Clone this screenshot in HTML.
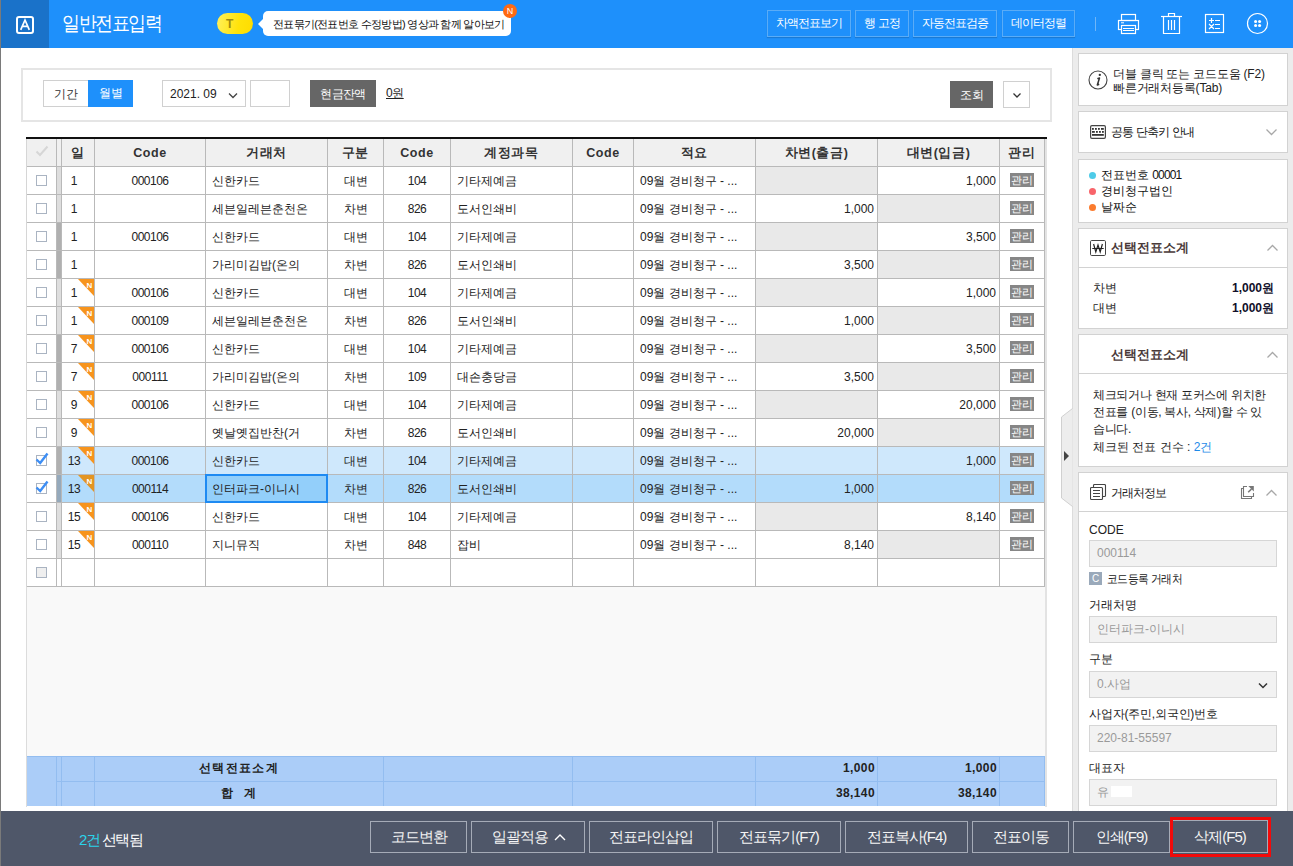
<!DOCTYPE html>
<html><head><meta charset="utf-8">
<style>
*{box-sizing:border-box;margin:0;padding:0}
html,body{width:1293px;height:866px;overflow:hidden;background:#fff;font-family:"Liberation Sans",sans-serif;color:#222;font-size:12px}
.a{position:absolute}
#lb{position:absolute;left:0;top:0;width:1px;height:866px;background:#7a7a7a;z-index:50}
#hdr{position:absolute;left:0;top:0;width:1293px;height:48px;background:#1e90fb}
#logo{position:absolute;left:1px;top:0;width:48px;height:48px;background:#1a72c9}
#logo .box{position:absolute;left:15px;top:16px;width:18px;height:18px;border:2px solid #fff;border-radius:2px;color:#fff;font-size:13px;line-height:14px;text-align:center;font-weight:normal}
#title{position:absolute;left:62px;top:10px;font-size:19.5px;color:#fff;line-height:26px;letter-spacing:-1.6px;transform:scaleX(0.9);transform-origin:0 0}
#tbadge{position:absolute;left:217px;top:13px;width:36px;height:21px;border-radius:11px;background:linear-gradient(100deg,#fff05c,#ffe30a 60%,#ffdc00);color:#a08a10;font-size:12px;line-height:23px;padding-left:9px;font-weight:bold}
#bubble{position:absolute;left:263px;top:11px;width:248px;height:25px;background:#fff;border-radius:5px;font-size:11px;line-height:27px;color:#111;padding-left:10px;letter-spacing:-0.7px;white-space:nowrap}
#bubble:before{content:"";position:absolute;left:-5px;top:8px;border-right:5px solid #fff;border-top:5px solid transparent;border-bottom:5px solid transparent}
#nbadge{position:absolute;left:503px;top:4px;width:14px;height:14px;border-radius:7px;background:#ff6a13;color:#fff;font-size:9px;line-height:14px;text-align:center}
.hb{position:absolute;top:10px;height:27px;border:1px solid #5aacf7;color:#fff;font-size:12px;line-height:25px;letter-spacing:-1px;text-align:center;box-shadow:0 1px 1px rgba(0,0,0,0.15)}
.ic{position:absolute}
/* filter */
#filter{position:absolute;left:21px;top:68px;width:1031px;height:54px;border:2px solid #e5e5e5}
.fbtn{position:absolute;top:80px;height:27px;font-size:12px;line-height:27px;text-align:center}
/* table */
#tbl{position:absolute;left:26px;top:137px;width:1021px;height:2px;background:#111}
.c{position:absolute;border-right:1px solid #b9b9b9;border-bottom:1px solid #b9b9b9;font-size:12px;line-height:29px;white-space:nowrap;overflow:hidden;color:#222}
.c.h{background:#f0f0f0;font-weight:bold;text-align:center;font-size:12.5px;color:#333;letter-spacing:0.6px}
.c.l{text-align:left;padding-left:6px}
.c.m{text-align:center}
.c.r{text-align:right;padding-right:3px}
.c.ck{text-align:center}
.c.num{letter-spacing:-0.5px}
.c.focus{border:2px solid #1e8af2;background:#93cffa;line-height:27px;padding-left:5px;z-index:5}
.cb{display:inline-block;position:relative;width:11px;height:11px;border:1px solid #aab4c2;vertical-align:middle;margin-top:-2px;background:#fff}
.cb.dis{background:#efefef;border-color:#a9b3c1}
.nb{position:absolute;right:0;top:0}
.day{display:block;text-align:center;padding-right:8px;letter-spacing:-0.4px}
.gl{display:inline-block;background:#868686;color:#fff;width:24px;height:14px;line-height:14px;font-size:11px;vertical-align:middle;margin-top:-3px}
#grayarea{position:absolute;left:26px;top:587px;width:1020px;height:170px;background:#f9f9f9}
.s{position:absolute;background:#abcdf8;border-right:1px solid #93bdf0;border-bottom:1px solid #93bdf0;font-weight:bold;font-size:12px;line-height:24px;color:#222}
.s.sm{text-align:center;letter-spacing:1.3px;line-height:22px}
.s.sr{text-align:right;padding-right:2px;line-height:22px;letter-spacing:0.4px}
/* right panel */
#rp{position:absolute;left:1072px;top:48px;width:221px;height:763px;background:#ececec;border-left:1px solid #dcdcdc}
.card{position:absolute;left:1078px;width:210px;background:#fff;border:1px solid #d2d2d2}
/* footer */
#ftr{position:absolute;left:0;top:811px;width:1293px;height:55px;background:#4f5769}
.fb{position:absolute;top:821px;height:32px;border:1px solid #a5abb7;color:#f4f4f4;font-size:15px;line-height:30px;text-align:center;letter-spacing:-1px}
</style></head><body>
<div id="lb"></div>
<div id="hdr">
  <div id="logo"><svg style="position:absolute;left:15px;top:16px" width="18" height="18" viewBox="0 0 18 18"><rect x="1" y="1" width="16" height="16" rx="2" fill="none" stroke="#fff" stroke-width="2"/><path d="M4.7 13.8 L9 4 L13.3 13.8 M6.3 10.4 H11.7" fill="none" stroke="#fff" stroke-width="1.7"/></svg></div>
  <div id="title">일반전표입력</div>
  <div id="tbadge">T</div>
  <div id="bubble">전표묶기(전표번호 수정방법) 영상과 함께 알아보기</div>
  <div id="nbadge">N</div>
  <div class="hb" style="left:767px;width:84px">차액전표보기</div>
  <div class="hb" style="left:855px;width:54px">행 고정</div>
  <div class="hb" style="left:913px;width:84px">자동전표검증</div>
  <div class="hb" style="left:1002px;width:73px">데이터정렬</div>
  <div class="a" style="left:1095px;top:17px;width:1px;height:14px;background:#6fb6f8"></div>
  <svg class="ic" style="left:1110px;top:0px" width="183" height="48" viewBox="1110 0 183 48" fill="none" stroke="#fff" stroke-width="1.2">
    <!-- printer -->
    <rect x="1121.5" y="14.5" width="14" height="6"/>
    <rect x="1118.5" y="20.5" width="20" height="9"/>
    <rect x="1121.5" y="25.5" width="14" height="8" fill="#1e90fb"/>
    <path d="M1123 28.5 H1134 M1123 30.5 H1134"/>
    <path d="M1121 22.8 H1124" stroke-width="1"/>
    <!-- trash -->
    <path d="M1161 16.5 H1182"/>
    <path d="M1168.5 16.5 V13.5 H1174.5 V16.5"/>
    <path d="M1163.5 16.5 V33.5 H1179.5 V16.5"/>
    <path d="M1168.5 20 V30 M1171.5 20 V30 M1174.5 20 V30"/>
    <!-- calc -->
    <rect x="1205.5" y="14.5" width="18" height="18"/>
    <path d="M1209 20.5 H1214 M1211.5 18 V23 M1215 20.5 H1220 M1209 24 L1214 29 M1214 24 L1209 29 M1215 24.5 H1220 M1215 28.5 H1220"/>
    <!-- dots circle -->
    <circle cx="1257.5" cy="23.5" r="10"/>
    <circle cx="1255.6" cy="21.5" r="1.55" fill="#fff" stroke="none"/><circle cx="1259.6" cy="21.5" r="1.55" fill="#fff" stroke="none"/>
    <circle cx="1255.6" cy="25.5" r="1.55" fill="#fff" stroke="none"/><circle cx="1259.6" cy="25.5" r="1.55" fill="#fff" stroke="none"/>
  </svg>
</div>

<div id="filter"></div>
<div class="fbtn" style="left:43px;width:46px;border:1px solid #d0d0d0;color:#333">기간</div>
<div class="fbtn" style="left:88px;width:45px;background:#1e90fb;color:#fff">월별</div>
<div class="fbtn" style="left:162px;width:84px;border:1px solid #d0d0d0;color:#222;text-align:left;padding-left:7px">2021. 09
  <svg style="position:absolute;left:65px;top:11px" width="10" height="7" viewBox="0 0 10 7"><path d="M1 1.5 L5 5.5 L9 1.5" fill="none" stroke="#444" stroke-width="1.3"/></svg></div>
<div class="fbtn" style="left:250px;width:40px;border:1px solid #d0d0d0"></div>
<div class="fbtn" style="left:310px;width:66px;background:#666;color:#fff;font-size:12px;line-height:29px;letter-spacing:-0.6px">현금잔액</div>
<div class="a" style="left:386px;top:81px;height:27px;line-height:25px;font-size:12px;color:#222;text-decoration:underline;letter-spacing:-0.5px">0원</div>
<div class="fbtn" style="left:950px;width:43px;top:81px;background:#666;color:#fff;line-height:29px">조회</div>
<div class="fbtn" style="left:1003px;width:27px;top:81px;border:1px solid #d0d0d0">
  <svg style="position:absolute;left:8px;top:10px" width="10" height="7" viewBox="0 0 10 7"><path d="M1.5 1.5 L5 5 L8.5 1.5" fill="none" stroke="#333" stroke-width="1.3"/></svg></div>

<div id="tbl"></div>
<div class="c h" style="left:27px;top:139px;width:30px;height:28px;"><svg width="14" height="12" viewBox="0 0 14 12" style="margin-top:2px"><path d="M1.5 6.5 L5 10 L12.5 1.5" fill="none" stroke="#d6d6d6" stroke-width="2"/></svg></div>
<div class="c h" style="left:57px;top:139px;width:5px;height:28px;"></div>
<div class="c h" style="left:62px;top:139px;width:33px;height:28px;">일</div>
<div class="c h" style="left:95px;top:139px;width:111px;height:28px;">Code</div>
<div class="c h" style="left:206px;top:139px;width:122px;height:28px;">거래처</div>
<div class="c h" style="left:328px;top:139px;width:56px;height:28px;">구분</div>
<div class="c h" style="left:384px;top:139px;width:67px;height:28px;">Code</div>
<div class="c h" style="left:451px;top:139px;width:122px;height:28px;">계정과목</div>
<div class="c h" style="left:573px;top:139px;width:61px;height:28px;">Code</div>
<div class="c h" style="left:634px;top:139px;width:122px;height:28px;">적요</div>
<div class="c h" style="left:756px;top:139px;width:122px;height:28px;">차변(출금)</div>
<div class="c h" style="left:878px;top:139px;width:122px;height:28px;">대변(입금)</div>
<div class="c h" style="left:1000px;top:139px;width:45px;height:28px;">관리</div>
<div class="c ck" style="left:27px;top:167px;width:30px;height:28px;"><span class="cb"></span></div>
<div class="c bar" style="left:57px;top:167px;width:5px;height:28px;background:#dedede;"></div>
<div class="c " style="left:62px;top:167px;width:33px;height:28px;"><span class="day">1</span></div>
<div class="c m num" style="left:95px;top:167px;width:111px;height:28px;">000106</div>
<div class="c l" style="left:206px;top:167px;width:122px;height:28px;">신한카드</div>
<div class="c m" style="left:328px;top:167px;width:56px;height:28px;">대변</div>
<div class="c m num" style="left:384px;top:167px;width:67px;height:28px;">104</div>
<div class="c l" style="left:451px;top:167px;width:122px;height:28px;">기타제예금</div>
<div class="c m" style="left:573px;top:167px;width:61px;height:28px;"></div>
<div class="c l" style="left:634px;top:167px;width:122px;height:28px;">09월 경비청구 - ...</div>
<div class="c r" style="left:756px;top:167px;width:122px;height:28px;background:#e9e9e9;"></div>
<div class="c r" style="left:878px;top:167px;width:122px;height:28px;">1,000</div>
<div class="c m" style="left:1000px;top:167px;width:45px;height:28px;"><span class="gl">관리</span></div>
<div class="c ck" style="left:27px;top:195px;width:30px;height:28px;"><span class="cb"></span></div>
<div class="c bar" style="left:57px;top:195px;width:5px;height:28px;background:#dedede;"></div>
<div class="c " style="left:62px;top:195px;width:33px;height:28px;"><span class="day">1</span></div>
<div class="c m num" style="left:95px;top:195px;width:111px;height:28px;"></div>
<div class="c l" style="left:206px;top:195px;width:122px;height:28px;">세븐일레븐춘천온</div>
<div class="c m" style="left:328px;top:195px;width:56px;height:28px;">차변</div>
<div class="c m num" style="left:384px;top:195px;width:67px;height:28px;">826</div>
<div class="c l" style="left:451px;top:195px;width:122px;height:28px;">도서인쇄비</div>
<div class="c m" style="left:573px;top:195px;width:61px;height:28px;"></div>
<div class="c l" style="left:634px;top:195px;width:122px;height:28px;">09월 경비청구 - ...</div>
<div class="c r" style="left:756px;top:195px;width:122px;height:28px;">1,000</div>
<div class="c r" style="left:878px;top:195px;width:122px;height:28px;background:#e9e9e9;"></div>
<div class="c m" style="left:1000px;top:195px;width:45px;height:28px;"><span class="gl">관리</span></div>
<div class="c ck" style="left:27px;top:223px;width:30px;height:28px;"><span class="cb"></span></div>
<div class="c bar" style="left:57px;top:223px;width:5px;height:28px;background:#b0b0b0;"></div>
<div class="c " style="left:62px;top:223px;width:33px;height:28px;"><span class="day">1</span></div>
<div class="c m num" style="left:95px;top:223px;width:111px;height:28px;">000106</div>
<div class="c l" style="left:206px;top:223px;width:122px;height:28px;">신한카드</div>
<div class="c m" style="left:328px;top:223px;width:56px;height:28px;">대변</div>
<div class="c m num" style="left:384px;top:223px;width:67px;height:28px;">104</div>
<div class="c l" style="left:451px;top:223px;width:122px;height:28px;">기타제예금</div>
<div class="c m" style="left:573px;top:223px;width:61px;height:28px;"></div>
<div class="c l" style="left:634px;top:223px;width:122px;height:28px;">09월 경비청구 - ...</div>
<div class="c r" style="left:756px;top:223px;width:122px;height:28px;background:#e9e9e9;"></div>
<div class="c r" style="left:878px;top:223px;width:122px;height:28px;">3,500</div>
<div class="c m" style="left:1000px;top:223px;width:45px;height:28px;"><span class="gl">관리</span></div>
<div class="c ck" style="left:27px;top:251px;width:30px;height:28px;"><span class="cb"></span></div>
<div class="c bar" style="left:57px;top:251px;width:5px;height:28px;background:#b0b0b0;"></div>
<div class="c " style="left:62px;top:251px;width:33px;height:28px;"><span class="day">1</span></div>
<div class="c m num" style="left:95px;top:251px;width:111px;height:28px;"></div>
<div class="c l" style="left:206px;top:251px;width:122px;height:28px;">가리미김밥(온의</div>
<div class="c m" style="left:328px;top:251px;width:56px;height:28px;">차변</div>
<div class="c m num" style="left:384px;top:251px;width:67px;height:28px;">826</div>
<div class="c l" style="left:451px;top:251px;width:122px;height:28px;">도서인쇄비</div>
<div class="c m" style="left:573px;top:251px;width:61px;height:28px;"></div>
<div class="c l" style="left:634px;top:251px;width:122px;height:28px;">09월 경비청구 - ...</div>
<div class="c r" style="left:756px;top:251px;width:122px;height:28px;">3,500</div>
<div class="c r" style="left:878px;top:251px;width:122px;height:28px;background:#e9e9e9;"></div>
<div class="c m" style="left:1000px;top:251px;width:45px;height:28px;"><span class="gl">관리</span></div>
<div class="c ck" style="left:27px;top:279px;width:30px;height:28px;"><span class="cb"></span></div>
<div class="c bar" style="left:57px;top:279px;width:5px;height:28px;background:#dedede;"></div>
<div class="c " style="left:62px;top:279px;width:33px;height:28px;"><span class="day">1</span><svg class="nb" width="16" height="17" viewBox="0 0 16 17"><path d="M0 0 H16 V17 Z" fill="#f7941d"/><text x="11.3" y="8.5" font-size="8" font-weight="bold" fill="#fff" font-family="Liberation Sans" text-anchor="middle">N</text></svg></div>
<div class="c m num" style="left:95px;top:279px;width:111px;height:28px;">000106</div>
<div class="c l" style="left:206px;top:279px;width:122px;height:28px;">신한카드</div>
<div class="c m" style="left:328px;top:279px;width:56px;height:28px;">대변</div>
<div class="c m num" style="left:384px;top:279px;width:67px;height:28px;">104</div>
<div class="c l" style="left:451px;top:279px;width:122px;height:28px;">기타제예금</div>
<div class="c m" style="left:573px;top:279px;width:61px;height:28px;"></div>
<div class="c l" style="left:634px;top:279px;width:122px;height:28px;">09월 경비청구 - ...</div>
<div class="c r" style="left:756px;top:279px;width:122px;height:28px;background:#e9e9e9;"></div>
<div class="c r" style="left:878px;top:279px;width:122px;height:28px;">1,000</div>
<div class="c m" style="left:1000px;top:279px;width:45px;height:28px;"><span class="gl">관리</span></div>
<div class="c ck" style="left:27px;top:307px;width:30px;height:28px;"><span class="cb"></span></div>
<div class="c bar" style="left:57px;top:307px;width:5px;height:28px;background:#dedede;"></div>
<div class="c " style="left:62px;top:307px;width:33px;height:28px;"><span class="day">1</span><svg class="nb" width="16" height="17" viewBox="0 0 16 17"><path d="M0 0 H16 V17 Z" fill="#f7941d"/><text x="11.3" y="8.5" font-size="8" font-weight="bold" fill="#fff" font-family="Liberation Sans" text-anchor="middle">N</text></svg></div>
<div class="c m num" style="left:95px;top:307px;width:111px;height:28px;">000109</div>
<div class="c l" style="left:206px;top:307px;width:122px;height:28px;">세븐일레븐춘천온</div>
<div class="c m" style="left:328px;top:307px;width:56px;height:28px;">차변</div>
<div class="c m num" style="left:384px;top:307px;width:67px;height:28px;">826</div>
<div class="c l" style="left:451px;top:307px;width:122px;height:28px;">도서인쇄비</div>
<div class="c m" style="left:573px;top:307px;width:61px;height:28px;"></div>
<div class="c l" style="left:634px;top:307px;width:122px;height:28px;">09월 경비청구 - ...</div>
<div class="c r" style="left:756px;top:307px;width:122px;height:28px;">1,000</div>
<div class="c r" style="left:878px;top:307px;width:122px;height:28px;background:#e9e9e9;"></div>
<div class="c m" style="left:1000px;top:307px;width:45px;height:28px;"><span class="gl">관리</span></div>
<div class="c ck" style="left:27px;top:335px;width:30px;height:28px;"><span class="cb"></span></div>
<div class="c bar" style="left:57px;top:335px;width:5px;height:28px;background:#b0b0b0;"></div>
<div class="c " style="left:62px;top:335px;width:33px;height:28px;"><span class="day">7</span><svg class="nb" width="16" height="17" viewBox="0 0 16 17"><path d="M0 0 H16 V17 Z" fill="#f7941d"/><text x="11.3" y="8.5" font-size="8" font-weight="bold" fill="#fff" font-family="Liberation Sans" text-anchor="middle">N</text></svg></div>
<div class="c m num" style="left:95px;top:335px;width:111px;height:28px;">000106</div>
<div class="c l" style="left:206px;top:335px;width:122px;height:28px;">신한카드</div>
<div class="c m" style="left:328px;top:335px;width:56px;height:28px;">대변</div>
<div class="c m num" style="left:384px;top:335px;width:67px;height:28px;">104</div>
<div class="c l" style="left:451px;top:335px;width:122px;height:28px;">기타제예금</div>
<div class="c m" style="left:573px;top:335px;width:61px;height:28px;"></div>
<div class="c l" style="left:634px;top:335px;width:122px;height:28px;">09월 경비청구 - ...</div>
<div class="c r" style="left:756px;top:335px;width:122px;height:28px;background:#e9e9e9;"></div>
<div class="c r" style="left:878px;top:335px;width:122px;height:28px;">3,500</div>
<div class="c m" style="left:1000px;top:335px;width:45px;height:28px;"><span class="gl">관리</span></div>
<div class="c ck" style="left:27px;top:363px;width:30px;height:28px;"><span class="cb"></span></div>
<div class="c bar" style="left:57px;top:363px;width:5px;height:28px;background:#b0b0b0;"></div>
<div class="c " style="left:62px;top:363px;width:33px;height:28px;"><span class="day">7</span><svg class="nb" width="16" height="17" viewBox="0 0 16 17"><path d="M0 0 H16 V17 Z" fill="#f7941d"/><text x="11.3" y="8.5" font-size="8" font-weight="bold" fill="#fff" font-family="Liberation Sans" text-anchor="middle">N</text></svg></div>
<div class="c m num" style="left:95px;top:363px;width:111px;height:28px;">000111</div>
<div class="c l" style="left:206px;top:363px;width:122px;height:28px;">가리미김밥(온의</div>
<div class="c m" style="left:328px;top:363px;width:56px;height:28px;">차변</div>
<div class="c m num" style="left:384px;top:363px;width:67px;height:28px;">109</div>
<div class="c l" style="left:451px;top:363px;width:122px;height:28px;">대손충당금</div>
<div class="c m" style="left:573px;top:363px;width:61px;height:28px;"></div>
<div class="c l" style="left:634px;top:363px;width:122px;height:28px;">09월 경비청구 - ...</div>
<div class="c r" style="left:756px;top:363px;width:122px;height:28px;">3,500</div>
<div class="c r" style="left:878px;top:363px;width:122px;height:28px;background:#e9e9e9;"></div>
<div class="c m" style="left:1000px;top:363px;width:45px;height:28px;"><span class="gl">관리</span></div>
<div class="c ck" style="left:27px;top:391px;width:30px;height:28px;"><span class="cb"></span></div>
<div class="c bar" style="left:57px;top:391px;width:5px;height:28px;background:#dedede;"></div>
<div class="c " style="left:62px;top:391px;width:33px;height:28px;"><span class="day">9</span><svg class="nb" width="16" height="17" viewBox="0 0 16 17"><path d="M0 0 H16 V17 Z" fill="#f7941d"/><text x="11.3" y="8.5" font-size="8" font-weight="bold" fill="#fff" font-family="Liberation Sans" text-anchor="middle">N</text></svg></div>
<div class="c m num" style="left:95px;top:391px;width:111px;height:28px;">000106</div>
<div class="c l" style="left:206px;top:391px;width:122px;height:28px;">신한카드</div>
<div class="c m" style="left:328px;top:391px;width:56px;height:28px;">대변</div>
<div class="c m num" style="left:384px;top:391px;width:67px;height:28px;">104</div>
<div class="c l" style="left:451px;top:391px;width:122px;height:28px;">기타제예금</div>
<div class="c m" style="left:573px;top:391px;width:61px;height:28px;"></div>
<div class="c l" style="left:634px;top:391px;width:122px;height:28px;">09월 경비청구 - ...</div>
<div class="c r" style="left:756px;top:391px;width:122px;height:28px;background:#e9e9e9;"></div>
<div class="c r" style="left:878px;top:391px;width:122px;height:28px;">20,000</div>
<div class="c m" style="left:1000px;top:391px;width:45px;height:28px;"><span class="gl">관리</span></div>
<div class="c ck" style="left:27px;top:419px;width:30px;height:28px;"><span class="cb"></span></div>
<div class="c bar" style="left:57px;top:419px;width:5px;height:28px;background:#dedede;"></div>
<div class="c " style="left:62px;top:419px;width:33px;height:28px;"><span class="day">9</span><svg class="nb" width="16" height="17" viewBox="0 0 16 17"><path d="M0 0 H16 V17 Z" fill="#f7941d"/><text x="11.3" y="8.5" font-size="8" font-weight="bold" fill="#fff" font-family="Liberation Sans" text-anchor="middle">N</text></svg></div>
<div class="c m num" style="left:95px;top:419px;width:111px;height:28px;"></div>
<div class="c l" style="left:206px;top:419px;width:122px;height:28px;">옛날옛집반찬(거</div>
<div class="c m" style="left:328px;top:419px;width:56px;height:28px;">차변</div>
<div class="c m num" style="left:384px;top:419px;width:67px;height:28px;">826</div>
<div class="c l" style="left:451px;top:419px;width:122px;height:28px;">도서인쇄비</div>
<div class="c m" style="left:573px;top:419px;width:61px;height:28px;"></div>
<div class="c l" style="left:634px;top:419px;width:122px;height:28px;">09월 경비청구 - ...</div>
<div class="c r" style="left:756px;top:419px;width:122px;height:28px;">20,000</div>
<div class="c r" style="left:878px;top:419px;width:122px;height:28px;background:#e9e9e9;"></div>
<div class="c m" style="left:1000px;top:419px;width:45px;height:28px;"><span class="gl">관리</span></div>
<div class="c ck" style="left:27px;top:447px;width:30px;height:28px;"><span class="cb"><svg width="15" height="14" viewBox="0 0 15 14" style="position:absolute;left:-2px;top:-4px"><path d="M1.5 7.5 L5.2 11 L12.5 1.5" fill="none" stroke="#3d8ef5" stroke-width="2.4"/></svg></span></div>
<div class="c bar" style="left:57px;top:447px;width:5px;height:28px;background:#b0b0b0;"></div>
<div class="c " style="left:62px;top:447px;width:33px;height:28px;background:#cfe8fc;"><span class="day">13</span><svg class="nb" width="16" height="17" viewBox="0 0 16 17"><path d="M0 0 H16 V17 Z" fill="#f7941d"/><text x="11.3" y="8.5" font-size="8" font-weight="bold" fill="#fff" font-family="Liberation Sans" text-anchor="middle">N</text></svg></div>
<div class="c m num" style="left:95px;top:447px;width:111px;height:28px;background:#cfe8fc;">000106</div>
<div class="c l" style="left:206px;top:447px;width:122px;height:28px;background:#cfe8fc;">신한카드</div>
<div class="c m" style="left:328px;top:447px;width:56px;height:28px;background:#cfe8fc;">대변</div>
<div class="c m num" style="left:384px;top:447px;width:67px;height:28px;background:#cfe8fc;">104</div>
<div class="c l" style="left:451px;top:447px;width:122px;height:28px;background:#cfe8fc;">기타제예금</div>
<div class="c m" style="left:573px;top:447px;width:61px;height:28px;background:#cfe8fc;"></div>
<div class="c l" style="left:634px;top:447px;width:122px;height:28px;background:#cfe8fc;">09월 경비청구 - ...</div>
<div class="c r" style="left:756px;top:447px;width:122px;height:28px;background:#cfe8fc;"></div>
<div class="c r" style="left:878px;top:447px;width:122px;height:28px;background:#cfe8fc;">1,000</div>
<div class="c m" style="left:1000px;top:447px;width:45px;height:28px;background:#cfe8fc;"><span class="gl">관리</span></div>
<div class="c ck" style="left:27px;top:475px;width:30px;height:28px;"><span class="cb"><svg width="15" height="14" viewBox="0 0 15 14" style="position:absolute;left:-2px;top:-4px"><path d="M1.5 7.5 L5.2 11 L12.5 1.5" fill="none" stroke="#3d8ef5" stroke-width="2.4"/></svg></span></div>
<div class="c bar" style="left:57px;top:475px;width:5px;height:28px;background:#95a9bb;"></div>
<div class="c " style="left:62px;top:475px;width:33px;height:28px;background:#b3dcfb;"><span class="day">13</span><svg class="nb" width="16" height="17" viewBox="0 0 16 17"><path d="M0 0 H16 V17 Z" fill="#e39523"/><text x="11.3" y="8.5" font-size="8" font-weight="bold" fill="#fff" font-family="Liberation Sans" text-anchor="middle">N</text></svg></div>
<div class="c m num" style="left:95px;top:475px;width:111px;height:28px;background:#b3dcfb;">000114</div>
<div class="c l focus" style="left:205px;top:474px;width:123px;height:29px;">인터파크-이니시</div>
<div class="c m" style="left:328px;top:475px;width:56px;height:28px;background:#b3dcfb;">차변</div>
<div class="c m num" style="left:384px;top:475px;width:67px;height:28px;background:#b3dcfb;">826</div>
<div class="c l" style="left:451px;top:475px;width:122px;height:28px;background:#b3dcfb;">도서인쇄비</div>
<div class="c m" style="left:573px;top:475px;width:61px;height:28px;background:#b3dcfb;"></div>
<div class="c l" style="left:634px;top:475px;width:122px;height:28px;background:#b3dcfb;">09월 경비청구 - ...</div>
<div class="c r" style="left:756px;top:475px;width:122px;height:28px;background:#b3dcfb;">1,000</div>
<div class="c r" style="left:878px;top:475px;width:122px;height:28px;background:#b3dcfb;"></div>
<div class="c m" style="left:1000px;top:475px;width:45px;height:28px;background:#b3dcfb;"><span class="gl">관리</span></div>
<div class="c ck" style="left:27px;top:503px;width:30px;height:28px;"><span class="cb"></span></div>
<div class="c bar" style="left:57px;top:503px;width:5px;height:28px;background:#dedede;"></div>
<div class="c " style="left:62px;top:503px;width:33px;height:28px;"><span class="day">15</span><svg class="nb" width="16" height="17" viewBox="0 0 16 17"><path d="M0 0 H16 V17 Z" fill="#f7941d"/><text x="11.3" y="8.5" font-size="8" font-weight="bold" fill="#fff" font-family="Liberation Sans" text-anchor="middle">N</text></svg></div>
<div class="c m num" style="left:95px;top:503px;width:111px;height:28px;">000106</div>
<div class="c l" style="left:206px;top:503px;width:122px;height:28px;">신한카드</div>
<div class="c m" style="left:328px;top:503px;width:56px;height:28px;">대변</div>
<div class="c m num" style="left:384px;top:503px;width:67px;height:28px;">104</div>
<div class="c l" style="left:451px;top:503px;width:122px;height:28px;">기타제예금</div>
<div class="c m" style="left:573px;top:503px;width:61px;height:28px;"></div>
<div class="c l" style="left:634px;top:503px;width:122px;height:28px;">09월 경비청구 - ...</div>
<div class="c r" style="left:756px;top:503px;width:122px;height:28px;background:#e9e9e9;"></div>
<div class="c r" style="left:878px;top:503px;width:122px;height:28px;">8,140</div>
<div class="c m" style="left:1000px;top:503px;width:45px;height:28px;"><span class="gl">관리</span></div>
<div class="c ck" style="left:27px;top:531px;width:30px;height:28px;"><span class="cb"></span></div>
<div class="c bar" style="left:57px;top:531px;width:5px;height:28px;background:#dedede;"></div>
<div class="c " style="left:62px;top:531px;width:33px;height:28px;"><span class="day">15</span><svg class="nb" width="16" height="17" viewBox="0 0 16 17"><path d="M0 0 H16 V17 Z" fill="#f7941d"/><text x="11.3" y="8.5" font-size="8" font-weight="bold" fill="#fff" font-family="Liberation Sans" text-anchor="middle">N</text></svg></div>
<div class="c m num" style="left:95px;top:531px;width:111px;height:28px;">000110</div>
<div class="c l" style="left:206px;top:531px;width:122px;height:28px;">지니뮤직</div>
<div class="c m" style="left:328px;top:531px;width:56px;height:28px;">차변</div>
<div class="c m num" style="left:384px;top:531px;width:67px;height:28px;">848</div>
<div class="c l" style="left:451px;top:531px;width:122px;height:28px;">잡비</div>
<div class="c m" style="left:573px;top:531px;width:61px;height:28px;"></div>
<div class="c l" style="left:634px;top:531px;width:122px;height:28px;">09월 경비청구 - ...</div>
<div class="c r" style="left:756px;top:531px;width:122px;height:28px;">8,140</div>
<div class="c r" style="left:878px;top:531px;width:122px;height:28px;background:#e9e9e9;"></div>
<div class="c m" style="left:1000px;top:531px;width:45px;height:28px;"><span class="gl">관리</span></div>
<div class="c ck" style="left:27px;top:559px;width:30px;height:28px;"><span class="cb dis"></span></div>
<div class="c bar" style="left:57px;top:559px;width:5px;height:28px;"></div>
<div class="c m" style="left:62px;top:559px;width:33px;height:28px;"></div>
<div class="c m" style="left:95px;top:559px;width:111px;height:28px;"></div>
<div class="c m" style="left:206px;top:559px;width:122px;height:28px;"></div>
<div class="c m" style="left:328px;top:559px;width:56px;height:28px;"></div>
<div class="c m" style="left:384px;top:559px;width:67px;height:28px;"></div>
<div class="c m" style="left:451px;top:559px;width:122px;height:28px;"></div>
<div class="c m" style="left:573px;top:559px;width:61px;height:28px;"></div>
<div class="c m" style="left:634px;top:559px;width:122px;height:28px;"></div>
<div class="c m" style="left:756px;top:559px;width:122px;height:28px;"></div>
<div class="c m" style="left:878px;top:559px;width:122px;height:28px;"></div>
<div class="c m" style="left:1000px;top:559px;width:45px;height:28px;"></div>
<div id="grayarea"></div>
<div class="a" style="left:26px;top:139px;width:1px;height:448px;background:#d6d6d6"></div>
<div class="a" style="left:26px;top:587px;width:1px;height:220px;background:#dcdcdc"></div>
<div class="a" style="left:27px;top:756px;width:1018px;height:1px;background:#93bdf0"></div>
<div class="s " style="left:27px;top:757px;width:30px;height:49px;border-bottom:0"></div>
<div class="s " style="left:57px;top:757px;width:5px;height:25px;"></div>
<div class="s " style="left:62px;top:757px;width:33px;height:25px;"></div>
<div class="s sm" style="left:95px;top:757px;width:289px;height:25px;">선택전표소계</div>
<div class="s " style="left:384px;top:757px;width:189px;height:25px;"></div>
<div class="s " style="left:573px;top:757px;width:183px;height:25px;"></div>
<div class="s sr" style="left:756px;top:757px;width:122px;height:25px;">1,000</div>
<div class="s sr" style="left:878px;top:757px;width:122px;height:25px;">1,000</div>
<div class="s " style="left:1000px;top:757px;width:45px;height:25px;"></div>
<div class="s " style="left:57px;top:782px;width:5px;height:24px;border-bottom:0"></div>
<div class="s " style="left:62px;top:782px;width:33px;height:24px;border-bottom:0"></div>
<div class="s sm" style="left:95px;top:782px;width:289px;height:24px;border-bottom:0">합&nbsp;&nbsp;계</div>
<div class="s " style="left:384px;top:782px;width:189px;height:24px;border-bottom:0"></div>
<div class="s " style="left:573px;top:782px;width:183px;height:24px;border-bottom:0"></div>
<div class="s sr" style="left:756px;top:782px;width:122px;height:24px;border-bottom:0">38,140</div>
<div class="s sr" style="left:878px;top:782px;width:122px;height:24px;border-bottom:0">38,140</div>
<div class="s " style="left:1000px;top:782px;width:45px;height:24px;border-bottom:0"></div>
<div class="a" style="left:1045px;top:139px;width:2px;height:668px;background:#e3e3e3"></div>

<div id="rp"></div>
<svg class="a" style="left:1060px;top:408px" width="13" height="99" viewBox="0 0 13 99"><path d="M12.5 0.5 L1.5 9 L1.5 90 L12.5 98.5" fill="#ededed" stroke="#d0d0d0" stroke-width="1"/></svg>
<svg class="a" style="left:1064px;top:451px" width="6" height="10" viewBox="0 0 6 10"><path d="M0 0 L5 5 L0 10Z" fill="#444"/></svg>

<!-- cards -->
<div class="card" style="top:53px;height:53px">
  <svg class="a" style="left:9px;top:16px" width="20" height="20" viewBox="0 0 20 20"><circle cx="10" cy="10" r="9" fill="none" stroke="#444" stroke-width="1.1"/><circle cx="11.8" cy="4.9" r="1.15" fill="#333"/><path d="M9.3 8.6 L11.5 8 L9.3 15 L11.2 14.2" fill="none" stroke="#333" stroke-width="1.5" stroke-linejoin="round"/></svg>
  <div class="a" style="left:34px;top:13px;font-size:12px;line-height:14px;color:#222;letter-spacing:-0.2px">더블 클릭 또는 코드도움 (F2)<br>빠른거래처등록(Tab)</div>
</div>
<div class="card" style="top:111px;height:42px">
  <svg class="a" style="left:11px;top:13px" width="16" height="14" viewBox="0 0 16 14"><rect x="0.6" y="0.6" width="14.8" height="12.8" rx="1.3" fill="none" stroke="#444" stroke-width="1.2"/><g fill="#333"><rect x="2" y="3" width="1.8" height="1.8"/><rect x="5" y="3" width="1.8" height="1.8"/><rect x="8" y="3" width="1.8" height="1.8"/><rect x="11" y="3" width="2.8" height="1.8"/><rect x="2" y="6" width="2.8" height="1.8"/><rect x="6" y="6" width="1.8" height="1.8"/><rect x="9" y="6" width="1.8" height="1.8"/><rect x="12" y="6" width="1.8" height="1.8"/><rect x="2" y="9" width="11.8" height="1.8"/></g></svg>
  <div class="a" style="left:32px;top:12px;font-size:12px;line-height:17px;color:#111;letter-spacing:-0.8px">공통 단축키 안내</div>
  <svg class="a" style="left:187px;top:16px" width="11" height="8" viewBox="0 0 11 8"><path d="M0.5 1.5 L5.5 6.5 L10.5 1.5" fill="none" stroke="#a8a8a8" stroke-width="1.3"/></svg>
</div>
<div class="card" style="top:159px;height:64px">
  <div class="a" style="left:10px;top:12px;width:7px;height:7px;border-radius:3.5px;background:#4ecbe8"></div>
  <div class="a" style="left:10px;top:28px;width:7px;height:7px;border-radius:3.5px;background:#f8646a"></div>
  <div class="a" style="left:10px;top:44px;width:7px;height:7px;border-radius:3.5px;background:#fb7b2e"></div>
  <div class="a" style="left:22px;top:7px;font-size:12px;line-height:16px;color:#111">전표번호 <span style="letter-spacing:-0.9px">00001</span><br>경비청구법인<br>날짜순</div>
</div>
<div class="card" style="top:228px;height:101px">
  <div class="a" style="left:0;top:0;width:208px;height:39px;border-bottom:1px solid #d2d2d2"></div>
  <svg class="a" style="left:11px;top:11px" width="16" height="16" viewBox="0 0 16 16"><rect x="0.5" y="0.5" width="15" height="15" rx="1.2" fill="none" stroke="#444"/><path d="M3.6 4 L5.8 12 L8 5 L10.2 12 L12.4 4" fill="none" stroke="#222" stroke-width="1.2"/><path d="M2.3 8.5 H13.7" stroke="#222" stroke-width="1"/></svg>
  <div class="a" style="left:32px;top:11px;font-size:12.5px;line-height:16px;font-weight:bold;color:#4a3a3a">선택전표소계</div>
  <svg class="a" style="left:188px;top:15px" width="11" height="8" viewBox="0 0 11 8"><path d="M0.5 6.5 L5.5 1.5 L10.5 6.5" fill="none" stroke="#a8a8a8" stroke-width="1.3"/></svg>
  <div class="a" style="left:14px;top:49px;font-size:12px;line-height:20px;color:#222">차변<br>대변</div>
  <div class="a" style="left:100px;top:49px;width:95px;text-align:right;font-size:12px;line-height:20px;font-weight:bold;color:#10102a">1,000원<br>1,000원</div>
</div>
<div class="card" style="top:334px;height:133px">
  <div class="a" style="left:0;top:0;width:208px;height:39px;border-bottom:1px solid #d2d2d2"></div>
  <div class="a" style="left:32px;top:12px;font-size:12.5px;line-height:16px;font-weight:bold;color:#4a3a3a">선택전표소계</div>
  <svg class="a" style="left:188px;top:16px" width="11" height="8" viewBox="0 0 11 8"><path d="M0.5 6.5 L5.5 1.5 L10.5 6.5" fill="none" stroke="#a8a8a8" stroke-width="1.3"/></svg>
  <div class="a" style="left:14px;top:52px;width:178px;font-size:12px;line-height:17px;color:#222;letter-spacing:-0.3px">체크되거나 현재 포커스에 위치한 전표를 (이동, 복사, 삭제)할 수 있습니다.</div>
  <div class="a" style="left:14px;top:104px;font-size:12px;line-height:17px;color:#222">체크된 전표 건수 : <span style="color:#1e8ae8">2건</span></div>
</div>
<div class="card" style="top:472px;height:340px">
  <div class="a" style="left:0;top:0;width:208px;height:39px;border-bottom:1px solid #d2d2d2"></div>
  <svg class="a" style="left:11px;top:11px" width="17" height="17" viewBox="0 0 17 17" fill="none" stroke="#444" stroke-width="1.1"><rect x="3.5" y="0.5" width="12" height="12" rx="1"/><rect x="0.5" y="3.5" width="12" height="12" rx="1" fill="#fff"/><path d="M3 6.5 H10 M3 9.5 H10 M3 12.5 H10"/></svg>
  <div class="a" style="left:32px;top:12px;font-size:12px;line-height:16px;color:#222;letter-spacing:-1px">거래처정보</div>
  <svg class="a" style="left:161px;top:12px" width="16" height="16" viewBox="0 0 16 16" fill="none" stroke="#777" stroke-width="1.1"><path d="M7 1.5 H3.5 V11.5 H13.5 V8"/><path d="M3.5 3.5 H1.5 V13.5 H11.5 V12"/><path d="M8.2 7.3 L11.5 4" stroke-width="1.6"/><path d="M8.3 1 H13.8 V6.5 Z" fill="#777" stroke="none"/></svg>
  <svg class="a" style="left:187px;top:16px" width="11" height="8" viewBox="0 0 11 8"><path d="M0.5 6.5 L5.5 1.5 L10.5 6.5" fill="none" stroke="#a8a8a8" stroke-width="1.3"/></svg>
  <div class="a" style="left:10px;top:49px;font-size:12px;line-height:16px;color:#222">CODE</div>
  <div class="a inp" style="left:10px;top:67px;width:188px;height:27px;border:1px solid #d6d6d6;background:#f2f2f2;color:#9a9a9a;font-size:12px;line-height:25px;padding-left:7px">000114</div>
  <div class="a" style="left:10px;top:99px;width:13px;height:13px;background:#9aa9ba;color:#fff;font-size:10px;line-height:13px;text-align:center">C</div>
  <div class="a" style="left:28px;top:98px;font-size:12px;line-height:16px;color:#222;letter-spacing:-0.5px;transform:scaleX(0.9);transform-origin:0 0">코드등록 거래처</div>
  <div class="a" style="left:10px;top:124px;font-size:12px;line-height:16px;color:#222">거래처명</div>
  <div class="a" style="left:10px;top:143px;width:188px;height:27px;border:1px solid #d6d6d6;background:#f2f2f2;color:#9a9a9a;font-size:12px;line-height:25px;padding-left:7px">인터파크-이니시</div>
  <div class="a" style="left:10px;top:178px;font-size:12px;line-height:16px;color:#222">구분</div>
  <div class="a" style="left:10px;top:198px;width:188px;height:27px;border:1px solid #d6d6d6;background:#f2f2f2;color:#9a9a9a;font-size:12px;line-height:25px;padding-left:7px">0.사업
    <svg style="position:absolute;left:168px;top:10px" width="10" height="7" viewBox="0 0 10 7"><path d="M1 1.5 L5 5.5 L9 1.5" fill="none" stroke="#333" stroke-width="1.5"/></svg></div>
  <div class="a" style="left:10px;top:233px;font-size:12px;line-height:16px;color:#222;letter-spacing:-0.2px">사업자(주민,외국인)번호</div>
  <div class="a" style="left:10px;top:252px;width:188px;height:27px;border:1px solid #d6d6d6;background:#f2f2f2;color:#9a9a9a;font-size:12px;line-height:25px;padding-left:7px">220-81-55597</div>
  <div class="a" style="left:10px;top:287px;font-size:12px;line-height:16px;color:#222">대표자</div>
  <div class="a" style="left:10px;top:306px;width:188px;height:27px;border:1px solid #d6d6d6;background:#f2f2f2;color:#9a9a9a;font-size:12px;line-height:25px;padding-left:7px">유<span style="display:inline-block;width:21px;height:11px;background:#fff;vertical-align:middle;margin-left:2px;margin-top:-2px"></span></div>
</div>

<div id="ftr">
  <div class="a" style="left:79px;top:20px;font-size:15px;line-height:18px;color:#fff;letter-spacing:-1.6px"><span style="color:#2bd3ea">2건</span> 선택됨</div>
</div>
<div class="fb" style="left:370px;width:97px">코드변환</div>
<div class="fb" style="left:471px;width:114px;text-align:left;padding-left:20px">일괄적용<svg style="position:absolute;left:82px;top:11px" width="12" height="8" viewBox="0 0 12 8"><path d="M1 7 L6 2 L11 7" fill="none" stroke="#fff" stroke-width="1.4"/></svg></div>
<div class="fb" style="left:589px;width:124px">전표라인삽입</div>
<div class="fb" style="left:717px;width:124px">전표묶기(F7)</div>
<div class="fb" style="left:845px;width:123px">전표복사(F4)</div>
<div class="fb" style="left:972px;width:97px">전표이동</div>
<div class="fb" style="left:1073px;width:97px">인쇄(F9)</div>
<div class="fb" style="left:1172px;width:96px;top:820px;height:33px;line-height:31px">삭제(F5)</div>
<div class="a" style="left:1170px;top:817px;width:101px;height:40px;border:3px solid #f20a0a"></div>
</body></html>
